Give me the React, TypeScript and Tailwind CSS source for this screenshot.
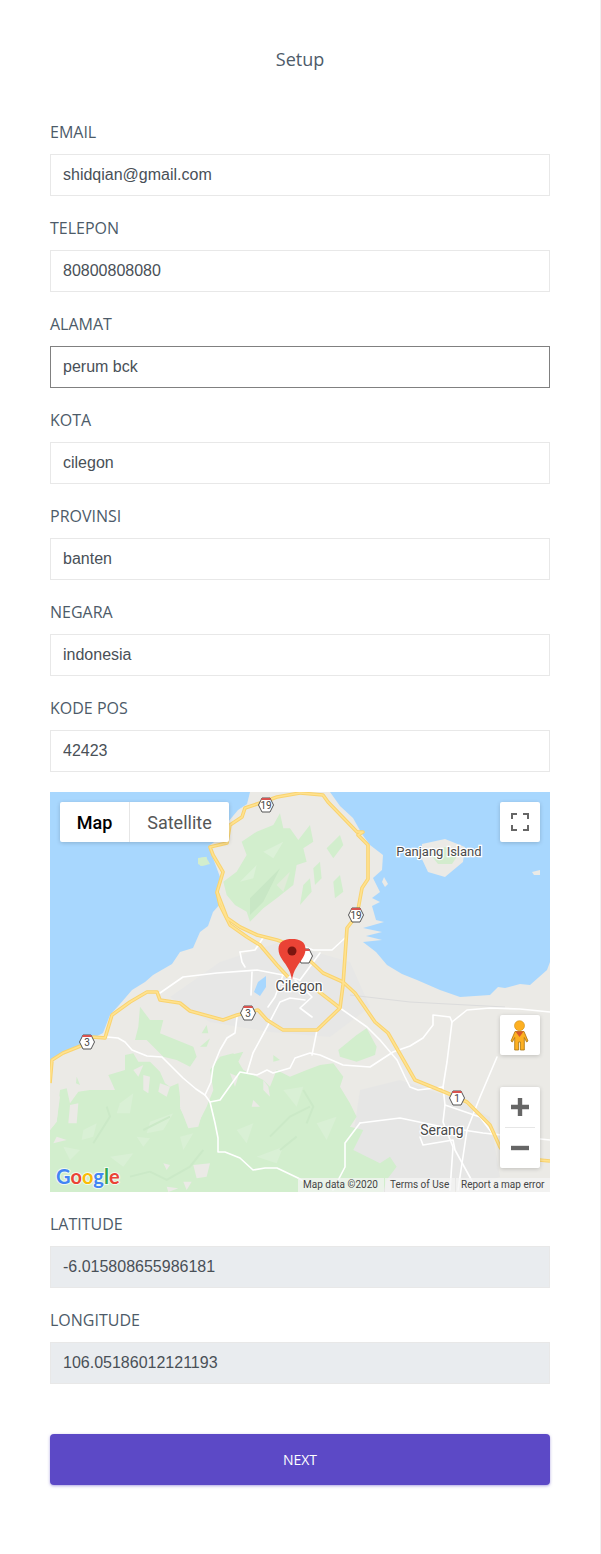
const FIELDS_TOP = [
  { label: "EMAIL", value: "shidqian@gmail.com" },
  { label: "TELEPON", value: "80800808080" },
  { label: "ALAMAT", value: "perum bck", focused: true },
  { label: "KOTA", value: "cilegon" },
  { label: "PROVINSI", value: "banten" },
  { label: "NEGARA", value: "indonesia" },
  { label: "KODE POS", value: "42423" },
];

const FIELDS_BOTTOM = [
  { label: "LATITUDE", value: "-6.015808655986181" },
  { label: "LONGITUDE", value: "106.05186012121193" },
];

// road lines in map coordinates
const WHITE_ROADS = [
  "M57 245L68 246L75 250L82 258L97 264L112 265L122 275L133 286L146 297L155 303L160 310L165 331L168 346L168 360L175 360L190 366L203 378L215 376L227 376L248 386L262 394",
  "M155 303L161 290L163 275L170 258L177 246L185 241L187 225",
  "M160 310L170 308L180 294L190 280L207 283L217 278L223 281L240 276L245 266L260 261L270 263L293 273L320 275L343 260L360 254L373 246L383 233L383 223L400 225L402 230L417 218L440 216L470 217L500 220",
  "M197 281L203 261L217 235L230 210L240 206L255 208",
  "M290 216L317 235L330 248L347 268L355 285L360 295L368 298L393 295",
  "M290 216L267 238L262 263",
  "M402 230L397 270L393 295L395 313L393 330L403 355L400 398",
  "M310 331L350 326L393 335L433 341L500 348",
  "M310 331L295 351L295 375L283 398",
  "M395 313L430 325L445 345",
  "M447 265L430 305L417 338L408 398",
  "M370 345L373 353L403 348L405 358L427 398",
  "M110 201L133 185L167 181L207 178L233 183L250 188",
  "M190 160L205 158L213 146",
  "M190 160L192 170L195 175",
  "M202 180L201 203",
  "M250 153L263 158L282 158L295 146",
  "M270 161L250 188",
  "M233 183L225 205L218 215",
  "M245 188L262 205L250 216L262 225",
];

const YELLOW_ROADS = [
  "M250 1L227 5L213 10L195 16L192 25L180 33L177 51L160 55L163 63L173 80L167 100L177 126L190 135L207 143L227 148L250 156",
  "M167 100L170 113L180 133L197 145L210 153L227 173L238 185",
  "M250 1L273 3L278 10L307 40L313 40L308 43L318 53L318 87L312 96L307 123L297 136L293 193L290 216L267 238L233 238L217 228L208 218L187 223L173 228L140 219L130 211L110 208L107 200L97 200L80 210L62 223L55 246L43 245L33 253L13 261L2 268L0 291",
  "M257 166L273 181L293 190L305 201L325 230L338 241L365 288L397 301L417 310L440 333L450 355L457 365L500 369",
  "M268 199L290 216",
];

// mottling of the hills, in the units of the lower left group
const LAND_FLECKS = [
  "M0 300L30 320L20 395L0 420Z",
  "M280 255L300 260L295 310L280 300Z",
  "M330 280L360 290L350 320L325 305Z",
  "M390 310L440 300L465 340L445 410L415 415L390 350Z",
  "M60 345L85 340L80 400L55 400Z",
  "M430 525L480 520L470 560L440 565Z",
  "M340 520L360 525L350 540Z",
  "M400 575L425 575L410 600Z",
  "M350 590L385 595L355 606Z",
  "M250 240L280 225L265 260Z",
  "M540 250L565 260L555 290Z",
  "M640 270L655 290L660 320L640 300Z",
  "M20 440L50 450L10 460Z",
  "M610 330L630 350L605 350Z",
];

const LIGHT_FLECKS = [
  "M210 340L250 310L240 370L200 370Z",
  "M100 420L140 400L130 440L95 450Z",
  "M300 395L370 370L340 420L290 430Z",
  "M260 440L300 445L280 470Z",
  "M390 440L430 430L400 480Z",
  "M180 500L250 490L220 530Z",
  "M560 420L610 400L590 460Z",
  "M700 300L760 290L740 350Z",
  "M800 400L860 380L830 450Z",
  "M620 500L700 470L680 520Z",
  "M40 470L90 480L60 510Z",
];

const DARK_RIDGES = [
  "M300 545L350 570L420 530L460 480",
  "M130 460L180 380L170 350",
  "M660 440L720 380L780 350",
  "M280 420L360 380",
  "M240 560L300 545",
  "M690 480L740 440",
  "M760 300L790 350L770 400",
];

function Shield({ x, y, n }: { x: number; y: number; n: string }) {
  return (
    <g transform={`translate(${x} ${y})`}>
      <path d="M-4 -7H4L7.5 0L4 7H-4L-7.5 0Z" fill="#fff" stroke="#555" strokeWidth="1" />
      <path d="M-4 -7H4L5 -5H-5Z" fill="#d9534f" />
      <text x="0" y="4" textAnchor="middle" fontFamily="Roboto, sans-serif" fontSize="10" fill="#444">
        {n}
      </text>
    </g>
  );
}

function MapLabel({ x, y, size, children }: { x: number; y: number; size: number; children: string }) {
  return (
    <text
      x={x}
      y={y}
      textAnchor="middle"
      fontFamily="Roboto, sans-serif"
      fontSize={size}
      fill="#4a4a4a"
      stroke="#fff"
      strokeWidth="2.5"
      paintOrder="stroke"
    >
      {children}
    </text>
  );
}

function MapDrawing() {
  return (
    <svg viewBox="0 0 500 400" className="absolute inset-0 w-[500px] h-[400px]">
      <rect width="500" height="400" fill="#ebeae6" />
      {/* water */}
      <path
        d="M0 0H200L197 12L188 18L178 30L170 46L160 53L163 66L170 85L167 103L170 112L163 120L158 134L150 140L143 156L130 160L122 172L103 183L95 190L82 198L70 212L60 223L53 241L30 253L12 262L0 270Z"
        fill="#a8d7fe"
      />
      <path
        d="M280 0L290 14L303 26L312 42L320 53L333 63L332 78L323 86L330 100L322 106L330 110L322 114L326 128L334 130L313 136L332 140L316 144L332 148L313 150L326 160L337 173L352 182L367 188L390 198L410 205L440 203L448 195L455 196L470 192L480 193L497 178L500 170V0Z"
        fill="#a8d7fe"
      />
      <path d="M372 52L395 47L415 55L413 70L395 85L378 80L371 65Z" fill="#ebeae6" />
      <path d="M380 62L395 55L410 60L402 72L388 72Z" fill="#d3ecce" />
      <path d="M148 66L156 65L160 72L152 74L148 72Z" fill="#d3ecce" />
      <path d="M334 85L338 92L335 95L332 90Z" fill="#ebeae6" />
      <path d="M482 80L490 78L490 83L484 83Z" fill="#ebeae6" />
      {/* built up areas */}
      <path d="M310 298L350 288L400 305L440 325L450 385L400 400L310 400L300 365Z" fill="#e6e6e5" />
      <path d="M170 170L230 150L300 170L320 215L280 245L220 240L160 230L120 205Z" fill="#e7e7e6" />
      <path d="M300 203L360 210L455 215" fill="none" stroke="#dcdcdc" strokeWidth="1" />
      {/* hills */}
      <g transform="translate(0 198) scale(0.3333)" fill="#d2eecd">
        <path d="M0 420L20 395L30 300L50 295L60 340L85 305L120 300L160 300L195 300L175 255L225 240L225 195L250 190L265 215L300 215L330 245L345 280L360 290L385 280L390 320L410 345L390 355L420 410L445 400L470 350L490 300L480 240L510 200L550 190L580 240L600 250L640 270L660 290L680 240L720 260L770 240L810 225L850 220L880 260L870 290L900 340L920 380L900 410L940 420L910 480L990 520L1020 500L1040 530L1010 570L1000 606H0Z" />
        <path d="M270 50L300 90L340 90L330 130L380 150L430 170L440 200L420 230L380 210L340 200L320 180L290 150L255 150L265 110Z" />
        <path d="M470 105L475 130L455 130Z" />
        <path d="M480 145L450 170L470 170Z" />
        <path d="M865 180L920 135L950 115L980 170L975 195L920 215L870 200Z" />
        <path d="M80 260L90 285L78 280Z" />
        <path d="M540 195L580 185L565 215Z" />
        <path d="M670 195L690 210L670 215Z" />
        {LAND_FLECKS.map((d) => (
          <path key={d} d={d} fill="#ebeae6" />
        ))}
        {LIGHT_FLECKS.map((d) => (
          <path key={d} d={d} fill="#d9f0d5" />
        ))}
        <g fill="none" stroke="#cbe9c7" strokeWidth="6">
          {DARK_RIDGES.map((d) => (
            <path key={d} d={d} />
          ))}
        </g>
      </g>
      <g transform="translate(0 -7) scale(0.3333)" fill="#d2eecd">
        <path d="M575 170L620 140L670 120L690 85L700 130L720 130L745 165L780 120L790 170L760 190L770 230L740 240L730 300L680 340L640 370L600 410L590 380L555 360L530 330L520 290L560 260L590 210Z" />
        <path d="M790 250L810 230L815 280L795 300Z" />
        <path d="M760 300L780 280L785 320L750 360Z" />
        <path d="M830 190L870 150L880 180L850 220Z" />
        <path d="M850 290L870 270L880 320L855 340Z" />
        <path d="M445 220L470 215L470 240L450 242Z" />
        <path d="M600 340L660 280L690 250L640 350L600 390Z" fill="#c8e7c5" />
        <path d="M570 290L620 240L610 280Z" fill="#dcf1d8" />
        <path d="M640 200L700 170L670 220Z" fill="#dcf1d8" />
        <path d="M680 300L720 260L700 320Z" fill="#e1ebda" />
      </g>
      {/* lakes */}
      <path d="M204 200L208 190L216 184L216 195L210 204Z" fill="#a8d7fe" />
      {/* roads */}
      <g fill="none" stroke="#fff" strokeWidth="1.6" strokeLinejoin="round" strokeLinecap="round">
        {WHITE_ROADS.map((d) => (
          <path key={d} d={d} />
        ))}
      </g>
      <g fill="none" strokeLinejoin="round">
        {YELLOW_ROADS.map((d) => (
          <path key={d} d={d} stroke="#f9d36f" strokeWidth="3.6" />
        ))}
        {YELLOW_ROADS.map((d) => (
          <path key={`${d}-in`} d={d} stroke="#ffe28f" strokeWidth="1.6" />
        ))}
      </g>
      <Shield x={216} y={13} n="19" />
      <Shield x={306} y={123} n="19" />
      <Shield x={198} y={221} n="3" />
      <Shield x={37} y={250} n="3" />
      <Shield x={407} y={306} n="1" />
      <Shield x={255} y={164} n="" />
      <MapLabel x={249} y={199} size={14}>Cilegon</MapLabel>
      <MapLabel x={389} y={64} size={13}>Panjang Island</MapLabel>
      <MapLabel x={392} y={343} size={14}>Serang</MapLabel>
      {/* marker */}
      <path
        d="M242 188C240.5 178 236 173 232.5 168C230 164.5 228.5 161 228.5 157C228.5 149.5 234.5 147 242 147C249.5 147 255.5 149.5 255.5 157C255.5 161 254 164.5 251.5 168C248 173 243.5 178 242 188Z"
        fill="#ea4335"
      />
      <circle cx="242" cy="159" r="4.5" fill="#7c1610" />
      {/* logo */}
      <text
        x="6"
        y="392"
        fontFamily="Lato, sans-serif"
        fontSize="20"
        fontWeight="700"
        stroke="#fff"
        strokeWidth="2"
        strokeOpacity="0.7"
        paintOrder="stroke"
      >
        <tspan fill="#4285f4">G</tspan>
        <tspan fill="#ea4335">o</tspan>
        <tspan fill="#fbbc05">o</tspan>
        <tspan fill="#4285f4">g</tspan>
        <tspan fill="#34a853">l</tspan>
        <tspan fill="#ea4335">e</tspan>
      </text>
    </svg>
  );
}

function GoogleMap() {
  return (
    <div className="relative w-[500px] h-[400px] mb-5 overflow-hidden font-['Roboto',sans-serif]">
      <MapDrawing />
      <div className="absolute left-[10px] top-[10px] flex h-10 bg-white rounded-[2px] shadow-[0_1px_4px_rgba(0,0,0,0.18)] text-[18px]">
        <div className="w-[70px] flex items-center justify-center font-medium text-black border-r border-[#e6e6e6]">Map</div>
        <div className="w-[99px] flex items-center justify-center text-[#565656]">Satellite</div>
      </div>
      <div className="absolute right-[10px] top-[10px] w-10 h-10 bg-white rounded-[2px] shadow-[0_1px_4px_rgba(0,0,0,0.18)] flex items-center justify-center">
        <svg width="18" height="18" viewBox="0 0 18 18" fill="none" stroke="#666" strokeWidth="2">
          <path d="M1 6V1H6M12 1H17V6M17 12V17H12M6 17H1V12" />
        </svg>
      </div>
      <div className="absolute right-[10px] top-[223px] w-10 h-10 bg-white rounded-[2px] shadow-[0_1px_4px_rgba(0,0,0,0.18)]">
        <svg width="40" height="40" viewBox="0 0 40 40">
          <path
            d="M15 16.5H24L28 26L26.6 27L24.3 22.5V35H20.4V27H18.6V35H14.7V22.5L12.4 27L11 26Z"
            fill="#fdb022"
            stroke="#a8730f"
            strokeWidth="0.8"
            strokeLinejoin="round"
          />
          <circle cx="19.5" cy="10.7" r="5" fill="#fdb022" stroke="#c98c14" strokeWidth="0.6" />
          <path d="M15.5 16.5H23.5L19.5 22Z" fill="#d9572b" />
        </svg>
      </div>
      <div className="absolute right-[10px] top-[295px] w-10 h-[81px] bg-white rounded-[2px] shadow-[0_1px_4px_rgba(0,0,0,0.18)]">
        <svg width="40" height="81" viewBox="0 0 40 81">
          <path d="M11 20H29M20 11V29" stroke="#666" strokeWidth="4.4" fill="none" />
          <path d="M5 40.5H35" stroke="#e6e6e6" strokeWidth="1" />
          <path d="M11 61H29" stroke="#666" strokeWidth="4.4" fill="none" />
        </svg>
      </div>
      <div className="absolute right-0 bottom-0 h-[14px] w-[252px] flex gap-px text-[10px] leading-[14px] text-[#444]">
        <span className="w-[86px] pl-[5px] bg-[#f5f5f5]/70">Map data ©2020</span>
        <span className="w-[70px] pl-[5px] bg-[#f5f5f5]/70">Terms of Use</span>
        <span className="flex-1 pl-[5px] bg-[#f5f5f5]/70">Report a map error</span>
      </div>
    </div>
  );
}

function Field({ label, value, focused, disabled }: { label: string; value: string; focused?: boolean; disabled?: boolean }) {
  return (
    <div className="mb-5">
      <label className="block h-6 leading-6 mb-[10px] text-[16px] text-[#4d5b69]">{label}</label>
      <input
        readOnly
        value={value}
        className={`block w-full h-[42px] px-3 border text-[16px] text-[#495057] font-['Liberation_Sans',Arial,sans-serif] outline-none ${
          focused ? "border-[#808080]" : "border-[#e8e8e8]"
        } ${disabled ? "bg-[#e9ecef]" : "bg-white"}`}
      />
    </div>
  );
}

export default function App() {
  return (
    <div className="w-[601px] h-[1554px] bg-white border-r border-[#f0f0f0] font-['Open_Sans',sans-serif]">
      <div className="px-[50px]">
        <h1 className="pt-[47px] h-[120px] text-center text-[18px] leading-[25px] text-[#4d5b69]">Setup</h1>
        {FIELDS_TOP.map((f) => (
          <Field key={f.label} {...f} />
        ))}
        <GoogleMap />
        {FIELDS_BOTTOM.map((f) => (
          <Field key={f.label} {...f} disabled />
        ))}
        <button className="block w-full h-[51px] mt-[50px] rounded bg-[#5c49c6] text-white text-[14px] shadow-[0_1px_3px_rgba(92,73,198,0.5)]">
          NEXT
        </button>
      </div>
    </div>
  );
}
